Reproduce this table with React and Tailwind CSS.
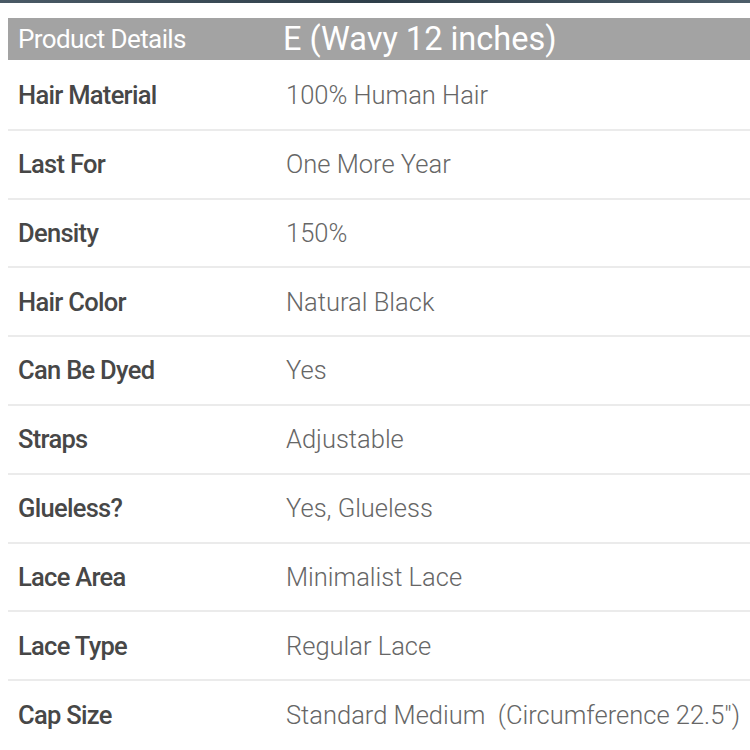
import React from 'react';

const rows = [
  ['Hair Material', '100% Human Hair'],
  ['Last For', 'One More Year'],
  ['Density', '150%'],
  ['Hair Color', 'Natural Black'],
  ['Can Be Dyed', 'Yes'],
  ['Straps', 'Adjustable'],
  ['Glueless?', 'Yes, Glueless'],
  ['Lace Area', 'Minimalist Lace'],
  ['Lace Type', 'Regular Lace'],
  ['Cap Size', 'Standard Medium\u00a0 (Circumference 22.5")'],
];

export default function App() {
  return (
    <div className="w-[750px] h-[750px] overflow-hidden bg-white">
      <div className="h-[3px] bg-gradient-to-r from-[#4a5a66] via-[#2f3f4a] to-[#4d5e6a]" />
      <div className="pl-2 pt-[15px]">
        {/* Header */}
        <div className="flex items-center h-[42px] bg-[#a3a3a3] text-white font-['Roboto',sans-serif]">
          <div className="w-[275px] pl-[10px] text-[26px] tracking-[-0.6px] leading-none">Product Details</div>
          <div className="text-[32.5px] leading-none">E (Wavy 12 inches)</div>
        </div>

        {/* Rows */}
        <div className="mt-[2px]">
          {rows.map(([label, value], i) => (
            <div
              key={label}
              className={`flex items-center h-[68.8px] ${i < rows.length - 1 ? 'border-b-2 border-[#ebebeb]' : ''}`}
            >
              <div className="w-[278px] pl-[10px] text-[25.5px] font-medium tracking-[-0.7px] text-[#474747] font-['Roboto',sans-serif]">
                {label}
              </div>
              <div className="text-[25.5px] font-light text-[#666666] font-['Roboto',sans-serif]">
                {value}
              </div>
            </div>
          ))}
        </div>
      </div>
    </div>
  );
}
